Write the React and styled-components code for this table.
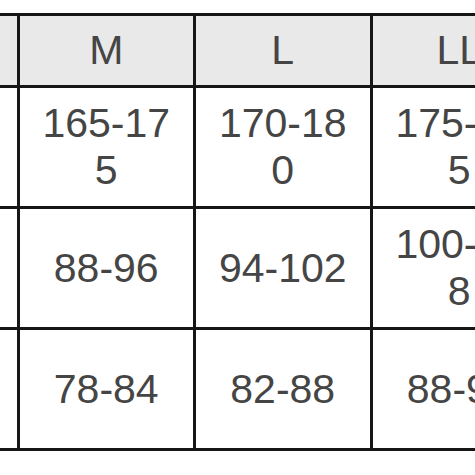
import styled, { createGlobalStyle } from "styled-components";

const GlobalStyle = createGlobalStyle`
    html, body {
        margin: 0;
        padding: 0;
        background: #fff;
    }
    body {
        font-family: "Liberation Sans", Arial, sans-serif;
    }
`;

const headers = ["サイズ", "M", "L", "LL", "3L"];
const rows = [
    ["身長", "165-175", "170-180", "175-185", "180-190"],
    ["胸囲", "88-96", "94-102", "100-108", "106-114"],
    ["胴囲", "78-84", "82-88", "88-94", "94-100"],
];

export default function App() {
    return (
        <>
            <GlobalStyle />
            <Viewport>
                <SizeTable>
                    {headers.map((h, i) => (
                        <HeadCell key={"h" + i}>{h}</HeadCell>
                    ))}
                    {rows.map((row, r) =>
                        row.map((value, c) => (
                            <Cell key={r + "-" + c}>{value}</Cell>
                        ))
                    )}
                </SizeTable>
            </Viewport>
        </>
    );
}

const Viewport = styled.div`
    width: 475px;
    height: 475px;
    overflow: hidden;
    padding-top: 13px;
    box-sizing: border-box;
`;
const SizeTable = styled.div`
    display: grid;
    grid-template-columns: repeat(5, 173.5px);
    grid-template-rows: 69px repeat(3, 118px);
    gap: 3px;
    padding: 3px;
    width: max-content;
    margin-left: -160px;
    background-color: #161616;
`;
const Cell = styled.div`
    display: flex;
    align-items: center;
    justify-content: center;
    text-align: center;
    padding: 0 16px;
    background-color: #fff;
    color: #454545;
    font-size: 41px;
    line-height: 47px;
    word-break: break-all;
    font-family: "Liberation Sans", "Noto Sans CJK JP", sans-serif;
`;
const HeadCell = styled(Cell)`
    background-color: #e9e9e9;
`;
